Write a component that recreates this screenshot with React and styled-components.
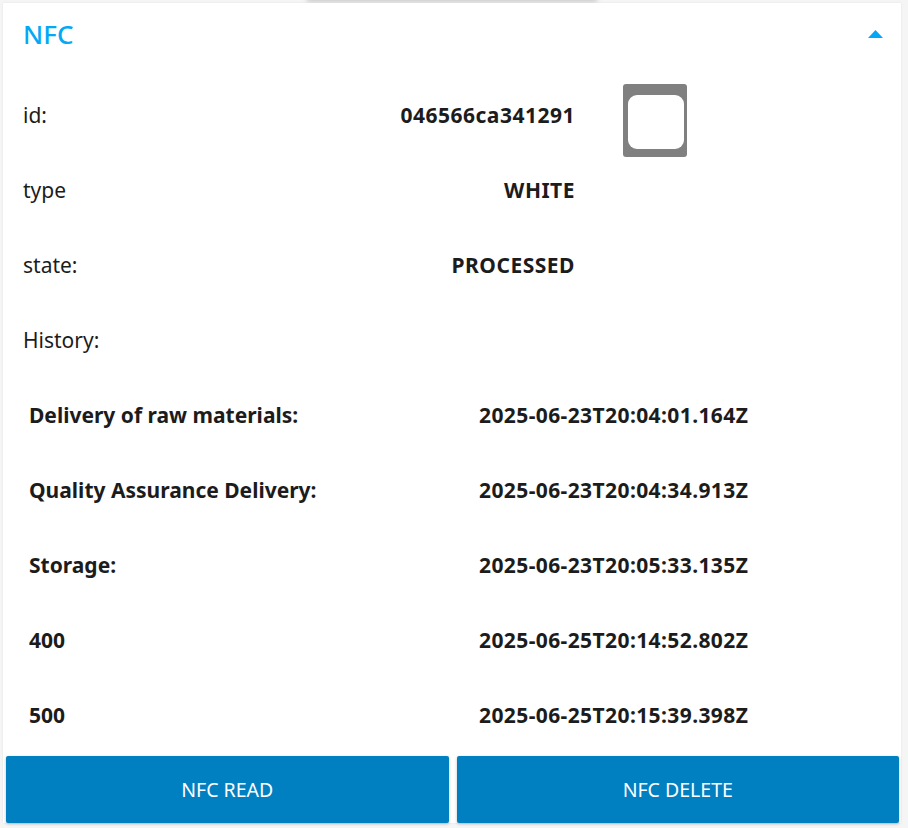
import React from "react";
import styled, { createGlobalStyle } from "styled-components";

const Global = createGlobalStyle`
  html, body {
    margin: 0;
    padding: 0;
    background: #f5f5f5;
    font-family: "Noto Sans", "Open Sans", sans-serif;
    color: #1c1c1c;
    overflow: hidden;
  }
`;

const Page = styled.div`
  width: 908px;
  height: 828px;
  overflow: hidden;
`;

const AboveCard = styled.div`
  width: 290px;
  height: 20px;
  margin: -20px 0 0 307px;
  background: #ffffff;
  box-shadow: 0 1px 5px rgba(0, 0, 0, 0.22);
`;

const Card = styled.div`
  width: 898px;
  margin: 3px 0 0 3px;
  background: #ffffff;
  box-shadow: 0 0 2px rgba(0, 0, 0, 0.08);
  display: flex;
  flex-direction: column;
`;

const Header = styled.div`
  height: 62px;
  display: flex;
  align-items: center;
  justify-content: space-between;
  padding: 0 18px 0 20px;
`;

const Title = styled.h2`
  margin: 0;
  font-size: 26px;
  font-weight: 500;
  color: #03a9f4;
`;

const Content = styled.div`
  padding-top: 12px;
`;

const Row = styled.div`
  height: 75px;
  display: grid;
  grid-template-columns: 180px 372px 48px 64px;
  grid-template-rows: 75px;
  align-items: center;
  padding-left: 20px;
`;

const Label = styled.div`
  font-size: 21px;
  font-weight: 400;
`;

const Value = styled.div`
  font-size: 21px;
  font-weight: 700;
  letter-spacing: 0.5px;
  text-align: right;
`;

const CheckBox = styled.svg`
  grid-column: 4;
  align-self: start;
  margin-top: 7px;
  display: block;
`;

const HistoryRow = styled.div`
  height: 75px;
  display: grid;
  grid-template-columns: 450px 1fr;
  align-items: center;
  padding-left: 26px;
  font-size: 21px;
  font-weight: 700;
`;

const Stamp = styled.div`
  letter-spacing: 0.4px;
`;

const Footer = styled.div`
  display: grid;
  grid-template-columns: 1fr 1fr;
  gap: 8px;
  padding: 4px 2px 0 3px;
`;

const ActionButton = styled.button`
  height: 67px;
  border: none;
  border-radius: 2px;
  background: #0080c1;
  color: #ffffff;
  font-family: "Noto Sans", "Open Sans", sans-serif;
  font-size: 19.5px;
  font-weight: 400;
  box-shadow: 0 1px 3px rgba(0, 0, 0, 0.25);
`;

const history = [
  ["Delivery of raw materials:", "2025-06-23T20:04:01.164Z"],
  ["Quality Assurance Delivery:", "2025-06-23T20:04:34.913Z"],
  ["Storage:", "2025-06-23T20:05:33.135Z"],
  ["400", "2025-06-25T20:14:52.802Z"],
  ["500", "2025-06-25T20:15:39.398Z"],
];

export default function App() {
  return (
    <Page>
      <Global />
      <AboveCard />
      <Card>
        <Header>
          <Title>NFC</Title>
          <svg width="15" height="8" viewBox="0 0 15 8">
            <path d="M0 8 L7.5 0 L15 8 Z" fill="#03a9f4" />
          </svg>
        </Header>
        <Content>
          <Row>
            <Label>id:</Label>
            <Value>046566ca341291</Value>
            <CheckBox width="64" height="73" viewBox="0 0 64 73">
              <rect x="0" y="0" width="64" height="73" rx="3" fill="#808080" />
              <rect x="5" y="11" width="56" height="54" rx="9" fill="#ffffff" />
            </CheckBox>
          </Row>
          <Row>
            <Label>type</Label>
            <Value>WHITE</Value>
          </Row>
          <Row>
            <Label>state:</Label>
            <Value>PROCESSED</Value>
          </Row>
          <Row>
            <Label>History:</Label>
          </Row>
          {history.map(([name, date]) => (
            <HistoryRow key={name}>
              <div>{name}</div>
              <Stamp>{date}</Stamp>
            </HistoryRow>
          ))}
        </Content>
        <Footer>
          <ActionButton>NFC READ</ActionButton>
          <ActionButton>NFC DELETE</ActionButton>
        </Footer>
      </Card>
    </Page>
  );
}
